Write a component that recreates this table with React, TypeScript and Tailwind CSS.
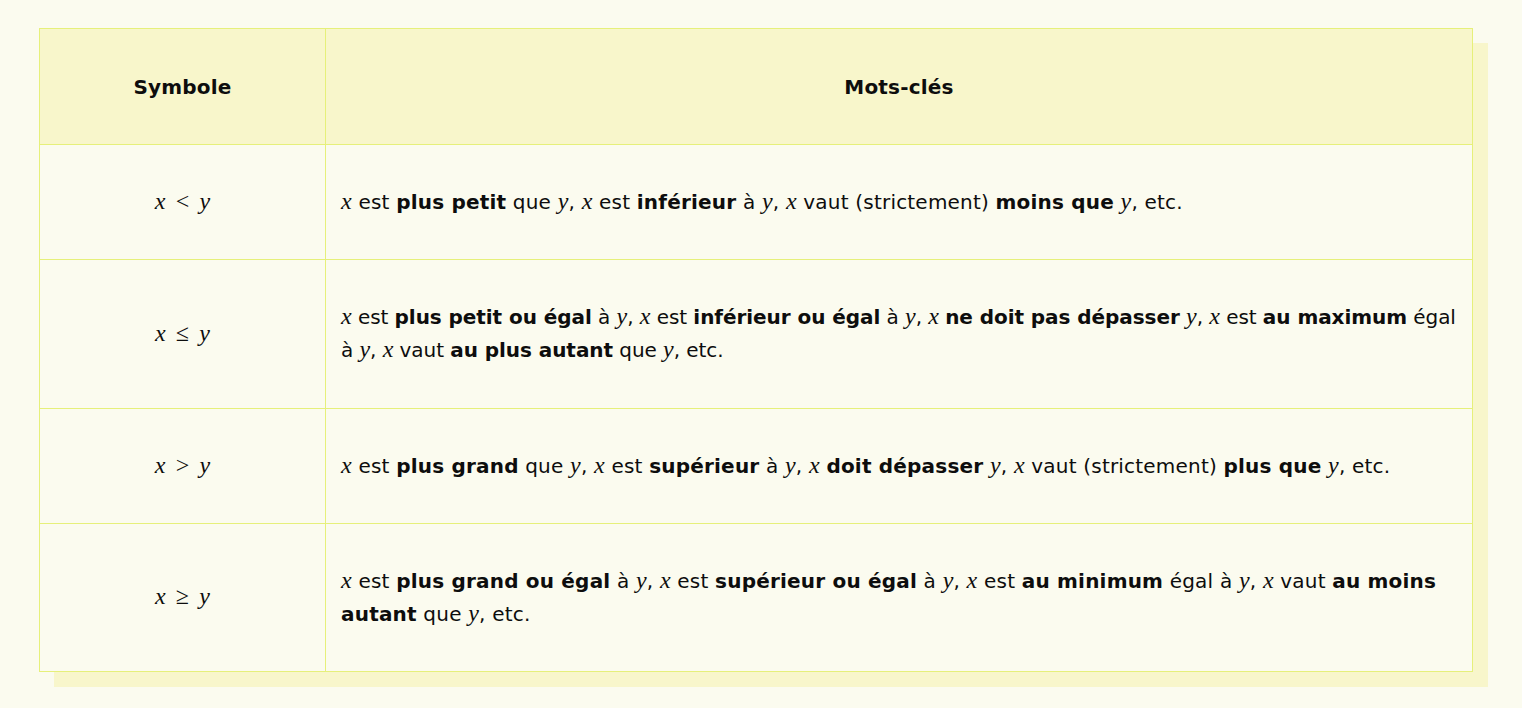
import React from "react";

const SERIF = '"Liberation Serif", "DejaVu Serif", serif';

const M = ({ children }: { children: React.ReactNode }) => (
  <span className="text-[24px] italic leading-none" style={{ fontFamily: SERIF }}>
    {children}
  </span>
);

const Op = ({ children }: { children: React.ReactNode }) => (
  <span className="mx-[10px] not-italic text-[24px] leading-none" style={{ fontFamily: SERIF }}>
    {children}
  </span>
);

const B = ({ children }: { children: React.ReactNode }) => <strong className="font-bold">{children}</strong>;

const X = () => <M>x</M>;
const Y = () => <M>y</M>;

const rows: { sym: string; cls: string; content: React.ReactNode }[] = [
  {
    sym: "<",
    cls: "py-[40.5px] tracking-[0.2px]",
    content: (
      <>
        <X /> est <B>plus petit</B> que <Y />, <X /> est <B>inférieur</B> à <Y />, <X /> vaut (strictement) <B>moins que</B> <Y />, etc.
      </>
    ),
  },
  {
    sym: "≤",
    cls: "py-[41px] tracking-[-0.06px]",
    content: (
      <>
        <X /> est <B>plus petit ou égal</B> à <Y />, <X /> est <B>inférieur ou égal</B> à <Y />, <X /> <B>ne doit pas dépasser</B> <Y />, <X /> est <B>au maximum</B> égal à <Y />, <X /> vaut <B>au plus autant</B> que <Y />, etc.
      </>
    ),
  },
  {
    sym: ">",
    cls: "py-[40.5px] tracking-[0.2px]",
    content: (
      <>
        <X /> est <B>plus grand</B> que <Y />, <X /> est <B>supérieur</B> à <Y />, <X /> <B>doit dépasser</B> <Y />, <X /> vaut (strictement) <B>plus que</B> <Y />, etc.
      </>
    ),
  },
  {
    sym: "≥",
    cls: "py-[40.5px] tracking-[0.2px]",
    content: (
      <>
        <X /> est <B>plus grand ou égal</B> à <Y />, <X /> est <B>supérieur ou égal</B> à <Y />, <X /> est <B>au minimum</B> égal à <Y />, <X /> vaut <B>au moins autant</B> que <Y />, etc.
      </>
    ),
  },
];

export default function App() {
  return (
    <div
      className="min-h-[708px] w-full bg-[#fbfbef] pt-[28px] pl-[39px] pr-[49px] text-[#0d0d0d]"
      style={{ fontFamily: '"DejaVu Sans", "Open Sans", sans-serif' }}
    >
      <div className="shadow-[15px_15px_0_0_#f8f6cb]">
        <table className="w-full border-collapse border border-[#e6f07a] text-[20px] tracking-[0.2px]">
          <thead>
            <tr className="bg-[#f8f6cb]">
              <th className="h-[116px] w-[286px] border border-[#e6f07a] text-center font-bold">Symbole</th>
              <th className="h-[116px] border border-[#e6f07a] text-center font-bold">Mots-clés</th>
            </tr>
          </thead>
          <tbody>
            {rows.map((r, i) => (
              <tr key={i}>
                <td className="border border-[#e6f07a] text-center align-middle leading-[33px]">
                  <X />
                  <Op>{r.sym}</Op>
                  <Y />
                </td>
                <td className={`border border-[#e6f07a] px-[15px] text-left leading-[33px] ${r.cls}`}>{r.content}</td>
              </tr>
            ))}
          </tbody>
        </table>
      </div>
    </div>
  );
}
